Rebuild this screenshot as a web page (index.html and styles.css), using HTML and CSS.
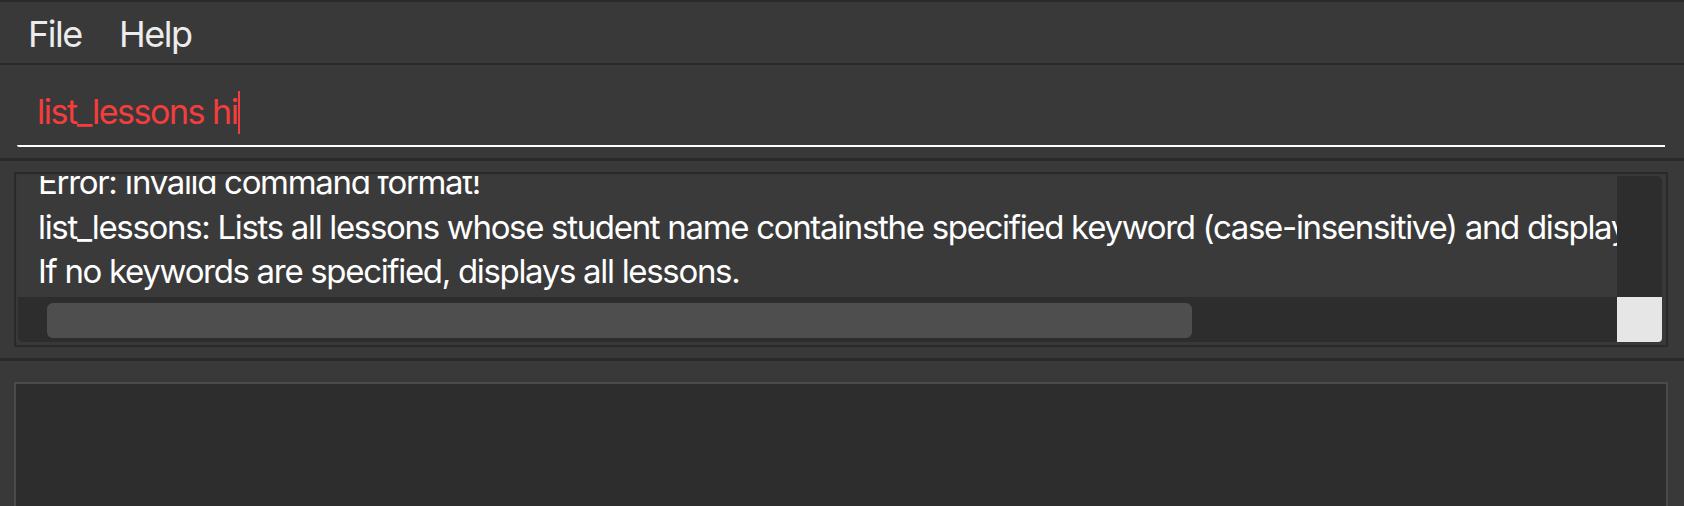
FILE: index.html
```html
<!DOCTYPE html>
<html>
<head>
<meta charset="utf-8">
<link rel="stylesheet" href="styles.css">
</head>
<body>
<div class="app">
  <div class="menubar">
    <span class="menu-item">File</span>
    <span class="menu-item">Help</span>
  </div>
  <div class="command-section">
    <div class="command-box"><span class="command-text">list_lessons hi</span><span class="caret"></span></div>
  </div>
  <div class="result-section">
    <div class="result-box">
      <div class="result-grid">
        <div class="result-view">
          <div class="result-text">
            <div class="line">Error: Invalid command format!</div>
            <div class="line">list_lessons: Lists all lessons whose student name containsthe specified keyword (case-insensitive) and displays them as a list with index numbers.</div>
            <div class="line">If no keywords are specified, displays all lessons.</div>
          </div>
        </div>
        <div class="vscroll"></div>
        <div class="hscroll"><div class="hthumb"></div></div>
        <div class="corner"></div>
      </div>
    </div>
  </div>
  <div class="list-section">
    <div class="list-box"></div>
  </div>
</div>
</body>
</html>
```

FILE: styles.css
```css
html, body {
  margin: 0;
  padding: 0;
  background: #393939;
  font-family: Inter, "Noto Sans", sans-serif;
  overflow: hidden;
  height: 506px;
}

.app {
  display: flex;
  flex-direction: column;
  height: 506px;
}

.menubar {
  height: 61px;
  border-top: 2px solid #2a2a2a;
  border-bottom: 2px solid #2a2a2a;
  display: flex;
  align-items: center;
  gap: 37px;
  padding-left: 28px;
  box-sizing: content-box;
}

.menu-item {
  color: #ececec;
  font-size: 36px;
  line-height: 40px;
  letter-spacing: -0.04em;
  margin-top: 2px;
}

.command-section {
  padding: 25px 19px 11px 17px;
  border-bottom: 3px solid #2a2a2a;
}

.command-box {
  height: 44px;
  padding: 0 0 11px 20px;
  border-bottom: 2px solid #ffffff;
  border-bottom-left-radius: 2px;
  display: flex;
  align-items: flex-start;
}

.command-text {
  color: #f53d3d;
  font-size: 34px;
  line-height: 44px;
  letter-spacing: -0.043em;
  white-space: pre;
}

.caret {
  width: 2px;
  height: 43px;
  background: #f53d3d;
  margin-left: 0;
  margin-top: 1px;
}

.result-section {
  padding: 11px 16px 11px 14px;
  border-bottom: 3px solid #2a2a2a;
}

.result-box {
  border: 2px solid #2a2a2a;
  padding: 2px 2px 1px 2px;
}

.result-grid {
  display: grid;
  grid-template-columns: 1fr 45px;
  grid-template-rows: 121px 45px;
  margin-right: 2px;
  margin-bottom: 2px;
}

.result-view {
  overflow: hidden;
  background: #3a3a3a;
}

.result-text {
  margin-top: -16px;
  padding-left: 20px;
  color: #ffffff;
  font-size: 33px;
  line-height: 44.5px;
  letter-spacing: -0.04em;
  white-space: nowrap;
}

.vscroll {
  background: #2d2d2d;
  border-top-right-radius: 5px;
}

.hscroll {
  background: #2d2d2d;
  border-bottom-left-radius: 5px;
  padding: 6px 0 0 29px;
}

.hthumb {
  width: 1145px;
  height: 35px;
  background: #4e4e4e;
  border-radius: 6px;
}

.corner {
  background: #e6e6e6;
  border-bottom-right-radius: 4px;
}

.list-section {
  flex: 1;
  padding: 21px 16px 0 14px;
  display: flex;
}

.list-box {
  flex: 1;
  background: #2d2d2d;
  border: 2px solid #4b4b4b;
  border-bottom: none;
}
```
